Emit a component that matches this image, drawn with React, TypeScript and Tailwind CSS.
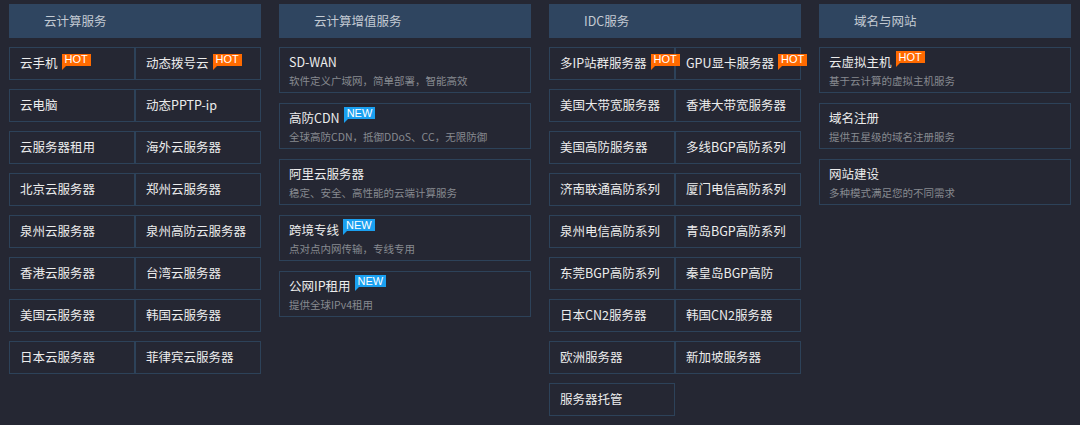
import React from "react";

type Badge = "HOT" | "NEW" | undefined;

function Tag({ kind }: { kind: Badge }) {
  if (!kind) return null;
  const bg = kind === "HOT" ? "bg-[#ff6a00]" : "bg-[#1aa0f0]";
  const tail = kind === "HOT" ? "border-t-[#ff6a00]" : "border-t-[#1aa0f0]";
  return (
    <span
      className={`relative -top-[4px] ml-[4px] inline-flex h-[12px] shrink-0 items-center px-[3px] text-[11px] leading-none text-white ${bg}`}
      style={{ fontFamily: "'Liberation Sans', Arial, sans-serif" }}
    >
      {kind}
      <span
        className={`absolute left-0 top-full h-0 w-0 border-r-[4px] border-t-[4px] border-r-transparent ${tail}`}
      />
    </span>
  );
}

function Header({ title }: { title: string }) {
  return (
    <div className="flex h-[34px] items-center bg-[#2f4560] pl-[35px] text-[12.5px] text-[#c3cad3]">
      {title}
    </div>
  );
}

type Cell = [string, Badge?];

function CellGrid({ items }: { items: Cell[] }) {
  return (
    <div className="mt-[9px] grid grid-cols-2 gap-y-[9px]">
      {items.map(([t, b], i) => (
        <div
          key={i}
          className="flex h-[33px] items-center whitespace-nowrap border border-[#2d4259] pl-[10px] text-[12.5px] text-[#ececec]"
        >
          <span>{t}</span>
          <Tag kind={b} />
        </div>
      ))}
    </div>
  );
}

type Card = [string, string, Badge?];

function CardList({ items }: { items: Card[] }) {
  return (
    <div className="mt-[9px] flex flex-col gap-[10px]">
      {items.map(([t, s, b], i) => (
        <div
          key={i}
          className="flex h-[46px] flex-col justify-center border border-[#2d4259] pl-[9px] whitespace-nowrap"
        >
          <div className="flex items-center text-[12.5px] leading-[19px] text-[#ececec]">
            <span>{t}</span>
            <Tag kind={b} />
          </div>
          <div className="mt-[1px] text-[10.5px] leading-[17px] text-[#878a90]">{s}</div>
        </div>
      ))}
    </div>
  );
}

export default function App() {
  return (
    <div
      className="min-h-[425px] w-[1080px] bg-[#252733] px-[9px] pt-[4px]"
      style={{ fontFamily: "'Noto Sans CJK SC', 'Noto Sans', sans-serif" }}
    >
      <div className="grid grid-cols-[252px_252px_252px_252px] gap-x-[18px]">
        <div>
          <Header title="云计算服务" />
          <CellGrid
            items={[
              ["云手机", "HOT"],
              ["动态拨号云", "HOT"],
              ["云电脑"],
              ["动态PPTP-ip"],
              ["云服务器租用"],
              ["海外云服务器"],
              ["北京云服务器"],
              ["郑州云服务器"],
              ["泉州云服务器"],
              ["泉州高防云服务器"],
              ["香港云服务器"],
              ["台湾云服务器"],
              ["美国云服务器"],
              ["韩国云服务器"],
              ["日本云服务器"],
              ["菲律宾云服务器"],
            ]}
          />
        </div>
        <div>
          <Header title="云计算增值服务" />
          <CardList
            items={[
              ["SD-WAN", "软件定义广域网，简单部署，智能高效"],
              ["高防CDN", "全球高防CDN，抵御DDoS、CC，无限防御", "NEW"],
              ["阿里云服务器", "稳定、安全、高性能的云端计算服务"],
              ["跨境专线", "点对点内网传输，专线专用", "NEW"],
              ["公网IP租用", "提供全球IPv4租用", "NEW"],
            ]}
          />
        </div>
        <div>
          <Header title="IDC服务" />
          <CellGrid
            items={[
              ["多IP站群服务器", "HOT"],
              ["GPU显卡服务器", "HOT"],
              ["美国大带宽服务器"],
              ["香港大带宽服务器"],
              ["美国高防服务器"],
              ["多线BGP高防系列"],
              ["济南联通高防系列"],
              ["厦门电信高防系列"],
              ["泉州电信高防系列"],
              ["青岛BGP高防系列"],
              ["东莞BGP高防系列"],
              ["秦皇岛BGP高防"],
              ["日本CN2服务器"],
              ["韩国CN2服务器"],
              ["欧洲服务器"],
              ["新加坡服务器"],
              ["服务器托管"],
            ]}
          />
        </div>
        <div>
          <Header title="域名与网站" />
          <CardList
            items={[
              ["云虚拟主机", "基于云计算的虚拟主机服务", "HOT"],
              ["域名注册", "提供五星级的域名注册服务"],
              ["网站建设", "多种模式满足您的不同需求"],
            ]}
          />
        </div>
      </div>
    </div>
  );
}
